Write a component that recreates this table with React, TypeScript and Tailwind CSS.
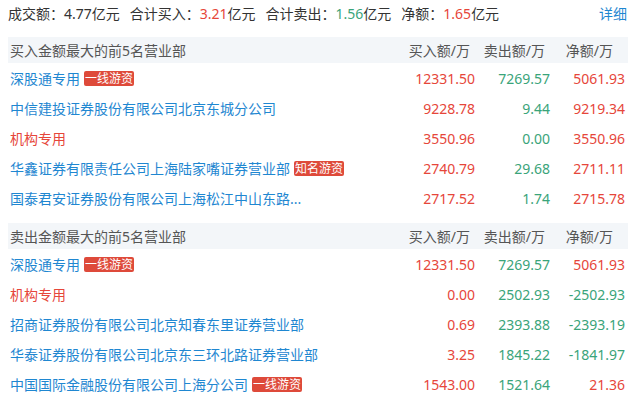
import React from "react";

type Row = { name: string; tag?: string; nameColor?: "blue" | "red"; buy: string; sell: string; net: string; netNeg?: boolean };

const buyRows: Row[] = [
  { name: "深股通专用", tag: "一线游资", buy: "12331.50", sell: "7269.57", net: "5061.93" },
  { name: "中信建投证券股份有限公司北京东城分公司", buy: "9228.78", sell: "9.44", net: "9219.34" },
  { name: "机构专用", nameColor: "red", buy: "3550.96", sell: "0.00", net: "3550.96" },
  { name: "华鑫证券有限责任公司上海陆家嘴证券营业部", tag: "知名游资", buy: "2740.79", sell: "29.68", net: "2711.11" },
  { name: "国泰君安证券股份有限公司上海松江中山东路...", buy: "2717.52", sell: "1.74", net: "2715.78" },
];

const sellRows: Row[] = [
  { name: "深股通专用", tag: "一线游资", buy: "12331.50", sell: "7269.57", net: "5061.93" },
  { name: "机构专用", nameColor: "red", buy: "0.00", sell: "2502.93", net: "-2502.93", netNeg: true },
  { name: "招商证券股份有限公司北京知春东里证券营业部", buy: "0.69", sell: "2393.88", net: "-2393.19", netNeg: true },
  { name: "华泰证券股份有限公司北京东三环北路证券营业部", buy: "3.25", sell: "1845.22", net: "-1841.97", netNeg: true },
  { name: "中国国际金融股份有限公司上海分公司", tag: "一线游资", buy: "1543.00", sell: "1521.64", net: "21.36" },
];

function Section({ title, rows, mt }: { title: string; rows: Row[]; mt: string }) {
  return (
    <div className={`ml-[8px] mr-[4px] ${mt}`}>
      <div className="flex items-center h-[26px] bg-[#f3f6f9] text-[#555555] pr-[3px]">
        <div className="flex-1 pl-[2px]">{title}</div>
        <div className="w-[75px] text-right pr-[5px]">买入额/万</div>
        <div className="w-[75px] text-right pr-[5px]">卖出额/万</div>
        <div className="w-[75px] text-right pr-[12px]">净额/万</div>
      </div>
      {rows.map((r, i) => (
        <div key={i} className="flex items-center h-[30px] pr-[3px]">
          <div className="flex-1 pl-[2px] flex items-center whitespace-nowrap">
            <span className={r.nameColor === "red" ? "text-[#e6463a]" : "text-[#1f87d1]"}>{r.name}</span>
            {r.tag && (
              <span className="ml-[4px] inline-flex items-center h-[15px] px-[1px] rounded-[2px] bg-[#de4a3a] text-white text-[12px] leading-[15px]">
                {r.tag}
              </span>
            )}
          </div>
          <div className="w-[75px] text-right text-[#e6463a]">{r.buy}</div>
          <div className="w-[75px] text-right text-[#3aa47a]">{r.sell}</div>
          <div className={`w-[75px] text-right ${r.netNeg ? "text-[#3aa47a]" : "text-[#e6463a]"}`}>{r.net}</div>
        </div>
      ))}
    </div>
  );
}

export default function App() {
  return (
    <div
      className="w-[632px] h-[399px] bg-white text-[14px] text-[#333333] overflow-hidden"
      style={{ fontFamily: "'Noto Sans', 'Noto Sans CJK SC', sans-serif" }}
    >
      <div className="flex items-center h-[26px] pl-[8px] pr-[5px]">
        <div className="flex items-center gap-[10px] flex-1 whitespace-nowrap">
          <span>成交额：4.77亿元</span>
          <span>
            合计买入：<span className="text-[#e6463a]">3.21</span>亿元
          </span>
          <span>
            合计卖出：<span className="text-[#3aa47a]">1.56</span>亿元
          </span>
          <span>
            净额：<span className="text-[#e6463a]">1.65</span>亿元
          </span>
        </div>
        <span className="text-[#1f87d1]">详细</span>
      </div>
      <Section title="买入金额最大的前5名营业部" rows={buyRows} mt="mt-[11px]" />
      <Section title="卖出金额最大的前5名营业部" rows={sellRows} mt="mt-[10px]" />
    </div>
  );
}
